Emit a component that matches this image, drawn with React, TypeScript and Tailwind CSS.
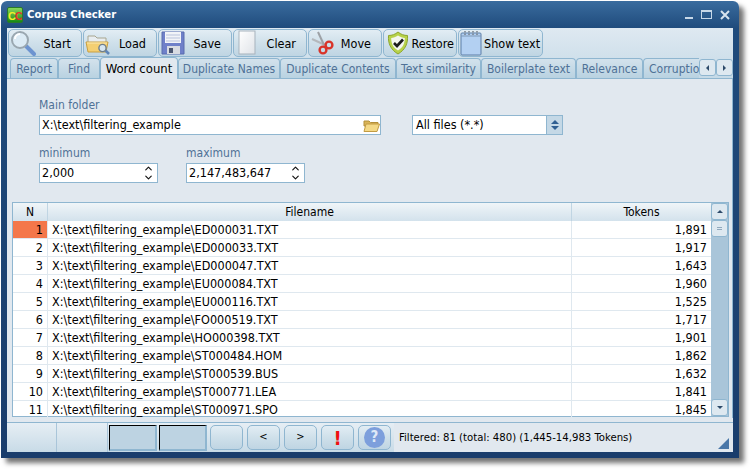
import type { ReactNode } from "react";
import { ChevronDown, ChevronUp } from "lucide-react";

const TABS = [
  { label: "Report", w: "w-[48px]" },
  { label: "Find", w: "w-[42px]" },
  { label: "Word count", w: "w-[78px]", active: true },
  { label: "Duplicate Names", w: "w-[102px]" },
  { label: "Duplicate Contents", w: "w-[116px]" },
  { label: "Text similarity", w: "w-[85px]" },
  { label: "Boilerplate text", w: "w-[95px]" },
  { label: "Relevance", w: "w-[67px]" },
];

const ROWS = [
  ["ED000031.TXT", "1,891"],
  ["ED000033.TXT", "1,917"],
  ["ED000047.TXT", "1,643"],
  ["EU000084.TXT", "1,960"],
  ["EU000116.TXT", "1,525"],
  ["FO000519.TXT", "1,717"],
  ["HO000398.TXT", "1,901"],
  ["ST000484.HOM", "1,862"],
  ["ST000539.BUS", "1,632"],
  ["ST000771.LEA", "1,841"],
  ["ST000971.SPO", "1,845"],
];

function ToolButton({ icon, label, w = "w-[74px]", textClass = "ml-auto mr-[10px]" }: { icon: ReactNode; label: string; w?: string; textClass?: string }) {
  return (
    <div className={`${w} h-[28px] shrink-0 flex items-center rounded-[5px] border border-[#8fb6d0] bg-gradient-to-b from-[#e2edf4] via-[#cfe0ea] to-[#bfd5e3] pl-[1px] text-[12.5px] text-black`}>
      {icon}
      <span className={`${textClass} pt-[2px] whitespace-nowrap`}>{label}</span>
    </div>
  );
}

function StatusButton({ children, w = "w-[33px]" }: { children?: ReactNode; w?: string }) {
  return (
    <div className={`${w} h-[25px] shrink-0 flex items-center justify-center rounded-[5px] border border-[#8fb6d0] bg-gradient-to-b from-[#e2edf4] via-[#cfe0ea] to-[#bfd5e3] text-[11px] text-black`}>
      {children}
    </div>
  );
}

function PressedCell() {
  return <div className="w-[48px] h-[26px] shrink-0 border-t border-l border-black border-r-2 border-b-2 border-r-[#8fb6d0] border-b-[#8fb6d0] bg-[#bdd3e2]" />;
}

function SpinInput({ value, w }: { value: string; w: string }) {
  return (
    <div className={`${w} h-[20px] flex items-center border border-[#8fb6d0] bg-white pl-[2px] pr-[3px] text-[12.5px] text-black`}>
      <span className="flex-1">{value}</span>
      <div className="flex flex-col -space-y-[2px]">
        <ChevronUp size={11} strokeWidth={2.5} color="#111" />
        <ChevronDown size={11} strokeWidth={2.5} color="#111" />
      </div>
    </div>
  );
}

function MagnifierIcon() {
  return (
    <svg width="26" height="26" viewBox="0 0 26 26" className="shrink-0">
      <path d="M16 16l8 8" stroke="#6d94d0" strokeWidth="4" strokeLinecap="round" />
      <circle cx="10" cy="10" r="8" fill="#dcebf5" stroke="#9aa7b0" strokeWidth="2" />
      <path d="M5 9a5 5 0 0 1 5-5" stroke="#fff" strokeWidth="2" fill="none" />
    </svg>
  );
}

function FolderIcon() {
  return (
    <svg width="26" height="26" viewBox="0 0 26 26" className="shrink-0">
      <path d="M3 6h7l2 2h9v8H3z" fill="#e8edf0" stroke="#a8a690" />
      <path d="M1 12h22l-2 10H3z" fill="#f4cf72" stroke="#c89f42" />
      <path d="M2 13h20" stroke="#fbe9ae" />
      <path d="M20 20l4 4" stroke="#5f86b8" strokeWidth="2.5" />
      <circle cx="17.5" cy="18" r="3.6" fill="#d6e6f2" stroke="#6e7e8c" strokeWidth="1.4" />
    </svg>
  );
}

function SaveIcon() {
  return (
    <svg width="24" height="24" viewBox="0 0 24 24" className="ml-[1px] shrink-0">
      <path d="M1 1h22v22H1z" fill="#6f80c9" stroke="#5a6cae" />
      <path d="M4 1h16v11H4z" fill="#f2f4f8" />
      <path d="M5 4h14M5 7h14M5 10h14" stroke="#b9c3dc" />
      <path d="M6 15h13v8H6z" fill="#d8dbe2" />
      <path d="M8 17h4v5H8z" fill="#4b5670" />
    </svg>
  );
}

function PageIcon() {
  return (
    <svg width="24" height="26" viewBox="0 0 24 26" className="ml-[3px] shrink-0">
      <defs>
        <linearGradient id="page" x1="0" y1="0" x2="1" y2="1">
          <stop offset="0" stopColor="#ffffff" />
          <stop offset="1" stopColor="#dfe3e8" />
        </linearGradient>
      </defs>
      <rect x="1" y="1" width="16" height="23" fill="url(#page)" stroke="#a7b3bd" />
    </svg>
  );
}

function ScissorsIcon() {
  return (
    <svg width="26" height="26" viewBox="0 0 26 26" className="shrink-0">
      <path d="M2 9l13 6" stroke="#b4b8bc" strokeWidth="2" />
      <path d="M8 2l6 13" stroke="#9da1a6" strokeWidth="2" />
      <circle cx="19" cy="15" r="3.4" fill="none" stroke="#d8342a" strokeWidth="2.4" />
      <circle cx="13" cy="20" r="3.4" fill="none" stroke="#d8342a" strokeWidth="2.4" />
    </svg>
  );
}

function ShieldIcon() {
  return (
    <svg width="24" height="24" viewBox="0 0 24 24" className="ml-[1px] shrink-0">
      <path d="M12 1c3 2.500 6 3.500 9.500 3.500c.5 8-2 14-9.500 18.500C4.500 18.500 2 12.500 2.500 4.500C6 4.500 9 3.500 12 1z" fill="#b7d24a" stroke="#8da52e" />
      <path d="M12 4.500c2.500 1.500 4.500 2.300 6.800 2.500c0 5.500-1.800 9.500-6.800 12.500C7 16.500 5.200 12.500 5.200 7C7.500 6.800 9.500 6 12 4.500z" fill="#f4f6f0" />
      <path d="M8 12l3 3l6-6.500" fill="none" stroke="#1c1c1c" strokeWidth="2.600" />
    </svg>
  );
}

function NotepadIcon() {
  return (
    <svg width="22" height="26" viewBox="0 0 22 26" className="shrink-0">
      <rect x="1" y="3" width="20" height="22" rx="1" fill="#b3d0f2" stroke="#5d7fa8" />
      <path d="M1 6h20" stroke="#7d97b5" />
      <path d="M5 1v5M9 1v5M13 1v5M17 1v5" stroke="#77808a" strokeWidth="1.500" strokeDasharray="1.500 1" />
    </svg>
  );
}

function AppIcon() {
  return (
    <div className="w-[16px] h-[16px] shrink-0 rounded-[2px] bg-gradient-to-b from-[#86d85a] to-[#128a12] border border-[#2a7a2a] flex items-end justify-center overflow-hidden">
      <span className="text-[11px] leading-[11px] font-bold tracking-[-1px] font-['Liberation_Sans']">
        <span className="text-[#f2ee2a]">C</span>
        <span className="text-[#e2322a]">C</span>
      </span>
    </div>
  );
}

function FolderSmall() {
  return (
    <svg width="17" height="15" viewBox="0 0 17 15">
      <path d="M1 3h5l1.500 1.500H15V8H1z" fill="#d9b458" stroke="#b48f38" />
      <path d="M1 13.500L3 6h13.500l-2.500 7.500z" fill="#f4d987" stroke="#c29b42" />
    </svg>
  );
}

export default function App() {
  return (
    <div className="w-[756px] h-[473px] bg-white overflow-hidden pt-[1px] pl-[1px] font-['DejaVu_Sans',sans-serif] [font-stretch:condensed]">
      <div className="w-[738px] h-[457px] rounded-t-[6px] px-[6px] pb-[6px] flex flex-col shadow-[5px_5px_5px_rgba(0,0,0,0.55)] bg-gradient-to-b from-[#3a6c9e] via-[#1f4b7c] via-[6%] to-[#1a3d6c]">
        <div className="h-[27px] shrink-0 flex items-center text-white text-[11.25px] font-bold">
          <AppIcon />
          <span className="ml-[4px] pt-[2px]">Corpus Checker</span>
          <div className="ml-auto flex items-center gap-[8px] mr-[3px]">
            <div className="w-[8px] h-[2px] bg-[#c7d8e8] mt-[7px]" />
            <div className="w-[11px] h-[9px] border border-t-2 border-[#c7d8e8]" />
            <svg width="10" height="10" viewBox="0 0 10 10"><path d="M1 1l8 8M9 1l-8 8" stroke="#d7e3ee" strokeWidth="2" /></svg>
          </div>
        </div>

        <div className="flex-1 min-h-0 flex flex-col bg-[#e1e8ef]">
          <div className="bg-gradient-to-b from-[#dfe9f1] to-[#c5dae7]">
            <div className="flex gap-[1px] pl-[1px] pt-[1px] h-[30px]">
              <ToolButton icon={<MagnifierIcon />} label="Start" />
              <ToolButton icon={<FolderIcon />} label="Load" />
              <ToolButton icon={<SaveIcon />} label="Save" />
              <ToolButton icon={<PageIcon />} label="Clear" />
              <ToolButton icon={<ScissorsIcon />} label="Move" />
              <ToolButton icon={<ShieldIcon />} label="Restore" textClass="ml-auto mr-[2px]" />
              <ToolButton icon={<NotepadIcon />} label="Show text" w="w-[85px]" textClass="ml-[2px]" />
            </div>

            <div className="flex h-[21px] items-end pl-[3px] relative border-b border-[#8fb6d0]">
              {TABS.map((t) =>
                t.active ? (
                  <div key={t.label} className={`${t.w} h-[22px] -mb-[1px] shrink-0 flex items-center justify-center rounded-t-[4px] border border-b-0 border-[#8fb6d0] bg-[#e1e8ef] text-[13px] text-black`}>
                    {t.label}
                  </div>
                ) : (
                  <div key={t.label} className={`${t.w} h-[20px] shrink-0 flex items-center justify-center rounded-t-[4px] border border-b-0 border-[#8fb6d0] bg-gradient-to-b from-[#d3e2ec] to-[#b9d2e1] text-[12px] text-[#4f7196]`}>
                    {t.label}
                  </div>
                ),
              )}
              <div className="w-[56px] h-[20px] shrink-0 overflow-hidden rounded-tl-[4px] border-l border-t border-[#8fb6d0] bg-gradient-to-b from-[#d3e2ec] to-[#b9d2e1] pl-[5px] pt-[1px] text-[12px] text-[#4f7196] whitespace-nowrap">
                Corruption
              </div>
              <div className="absolute right-[0px] bottom-[2px] flex">
                <div className="w-[17px] h-[17px] flex items-center justify-center rounded-[3px] border border-[#8fb6d0] bg-[#dde8f0]">
                  <div className="border-y-[3px] border-y-transparent border-r-[3px] border-r-[#2d4a6a]" />
                </div>
                <div className="w-[17px] h-[17px] flex items-center justify-center rounded-[3px] border border-[#8fb6d0] bg-[#dde8f0]">
                  <div className="border-y-[3px] border-y-transparent border-l-[3px] border-l-[#2d4a6a]" />
                </div>
              </div>
            </div>
          </div>

          <div className="flex-1 min-h-0 flex flex-col pl-[5px] pr-[3px] border-r border-[#8fb6d0]">
            <div className="h-[123px] shrink-0 pl-[27px] pt-[18px]">
              <div className="text-[12px] leading-[16px] text-[#4f7196]">Main folder</div>
              <div className="flex mt-[2px]">
                <div className="w-[342px] h-[20px] flex items-center justify-between border border-[#8fb6d0] bg-white pl-[2px] text-[12.5px] text-black">
                  <span>X:\text\filtering_example</span>
                  <FolderSmall />
                </div>
                <div className="ml-[31px] w-[151px] h-[20px] flex items-center border border-[#8fb6d0] bg-white text-[12.5px] text-black">
                  <span className="flex-1 pl-[3px]">All files (*.*)</span>
                  <div className="w-[16px] h-full flex flex-col items-center justify-center gap-[2px] bg-[#c4d8e6] border-l border-[#8fb6d0]">
                    <div className="border-x-[4px] border-x-transparent border-b-[4px] border-b-[#2f5f92]" />
                    <div className="border-x-[4px] border-x-transparent border-t-[4px] border-t-[#2f5f92]" />
                  </div>
                </div>
              </div>
              <div className="flex gap-[28px] mt-[10px]">
                <div>
                  <div className="text-[12px] leading-[16px] text-[#4f7196]">minimum</div>
                  <div className="mt-[2px]"><SpinInput value="2,000" w="w-[119px]" /></div>
                </div>
                <div>
                  <div className="text-[12px] leading-[16px] text-[#4f7196]">maximum</div>
                  <div className="mt-[2px]"><SpinInput value="2,147,483,647" w="w-[119px]" /></div>
                </div>
              </div>
            </div>

            <div className="h-[215px] shrink-0 border border-[#8fb6d0] flex bg-white">
              <div className="flex-1 min-w-0 text-[12.5px] text-black">
                <div className="flex h-[18px] bg-gradient-to-b from-[#f0f5f8] to-[#d3e2ec] leading-[18px] text-[12px]">
                  <div className="w-[35px] text-center border-r border-[#c0d5e3]">N</div>
                  <div className="w-[524px] text-center border-r border-[#c0d5e3]">Filename</div>
                  <div className="flex-1 text-center">Tokens</div>
                </div>
                {ROWS.map(([name, tokens], i) => (
                  <div key={name} className="flex h-[18px] leading-[17px] border-b border-[#dfe8ef]">
                    <div className={`w-[35px] text-right pr-[4px] border-r border-[#dfe8ef] ${i === 0 ? "bg-[#f4774a]" : ""}`}>{i + 1}</div>
                    <div className="w-[524px] pl-[4px] border-r border-[#dfe8ef]">X:\text\filtering_example\{name}</div>
                    <div className="flex-1 text-right pr-[4px]">{tokens}</div>
                  </div>
                ))}
              </div>
              <div className="w-[17px] shrink-0 flex flex-col bg-[#a9c5d9]">
                <div className="h-[17px] flex items-center justify-center rounded-[3px] border border-[#8fb6d0] bg-[#dde8f0]">
                  <div className="border-x-[3px] border-x-transparent border-b-[3px] border-b-[#2d4a6a]" />
                </div>
                <div className="h-[17px] flex flex-col items-center justify-center gap-[1px] rounded-[3px] border border-[#8fb6d0] bg-[#dde8f0]">
                  <div className="w-[5px] h-px bg-[#8fa8bd]" />
                  <div className="w-[5px] h-px bg-[#8fa8bd]" />
                </div>
                <div className="mt-auto h-[17px] flex items-center justify-center rounded-[3px] border border-[#8fb6d0] bg-[#dde8f0]">
                  <div className="border-x-[3px] border-x-transparent border-t-[3px] border-t-[#2d4a6a]" />
                </div>
              </div>
            </div>
          </div>

          <div className="mt-[4px] h-[30px] shrink-0 flex items-center border-t border-[#8fb6d0] bg-gradient-to-b from-[#e6eef4] to-[#c8dbe7]">
            <div className="w-[50px] h-full border-r border-[#a9c5d9]" />
            <div className="w-[51px] h-full border-r border-[#a9c5d9]" />
            <div className="flex items-center gap-[2px] ml-[1px] self-end mb-[1px]">
              <PressedCell />
              <PressedCell />
            </div>
            <div className="flex items-center gap-[4px] ml-[3px]">
              <StatusButton />
              <StatusButton>&lt;</StatusButton>
              <StatusButton>&gt;</StatusButton>
              <StatusButton><span className="text-[20px] font-bold text-[#f01010] leading-none">!</span></StatusButton>
              <StatusButton>
                <div className="w-[21px] h-[21px] rounded-full bg-[#7d9fdc] flex items-center justify-center text-[15px] font-bold text-[#dfe9f7]">?</div>
              </StatusButton>
            </div>
            <div className="flex-1 self-stretch flex items-center pl-[5px] pt-[2px] ml-[3px] bg-[#e1e8ef] text-[11.25px] text-black relative">
              Filtered: 81 (total: 480) (1,445-14,983 Tokens)
              <svg width="11" height="11" viewBox="0 0 11 11" className="absolute right-[4px] bottom-[3px]">
                <path d="M11 0v11H0z" fill="#4a77a8" />
              </svg>
            </div>
          </div>
        </div>
      </div>
    </div>
  );
}
